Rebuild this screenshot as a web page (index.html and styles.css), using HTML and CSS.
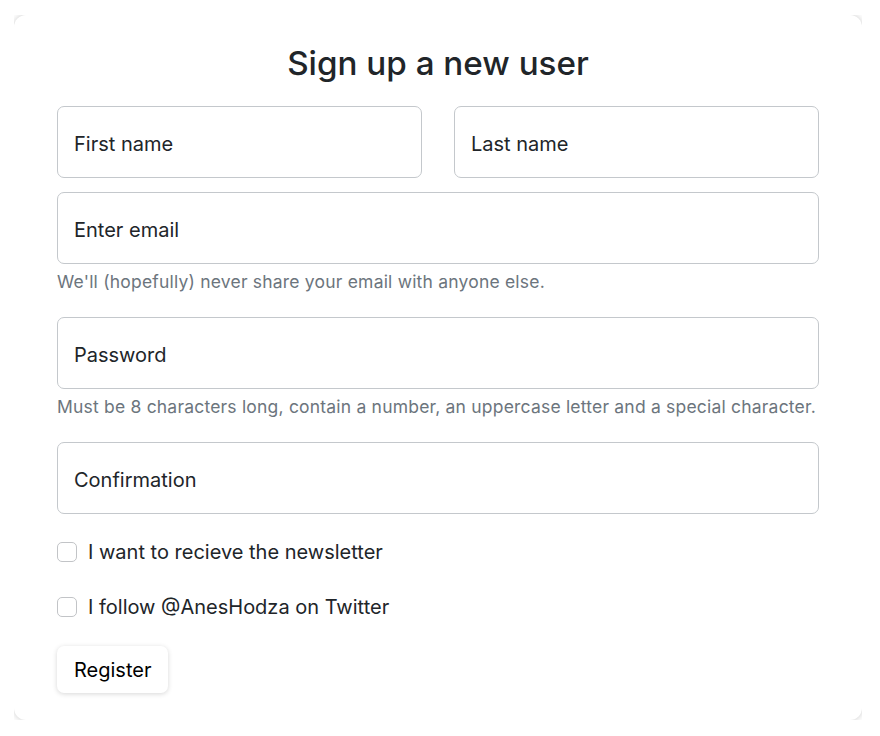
FILE: index.html
```html
<!DOCTYPE html>
<html lang="en">
<head>
    <meta charset="UTF-8">
    <meta name="viewport" content="width=device-width, initial-scale=1.0">
    <title>Sign up</title>
    <link rel="stylesheet" href="styles.css">
</head>
<body>

<div class="card">
    <h1 class="title">Sign up a new user</h1>

    <form class="signup-form">
        <div class="name-row">
            <input class="field" type="text" placeholder="First name">
            <input class="field" type="text" placeholder="Last name">
        </div>

        <div class="group">
            <input class="field" type="email" placeholder="Enter email">
            <div class="help">We'll (hopefully) never share your email with anyone else.</div>
        </div>

        <div class="group">
            <input class="field" type="password" placeholder="Password">
            <div class="help">Must be 8 characters long, contain a number, an uppercase letter and a special character.</div>
        </div>

        <input class="field" type="password" placeholder="Confirmation">

        <label class="check first-check">
            <input type="checkbox"> I want to recieve the newsletter
        </label>
        <label class="check">
            <input type="checkbox"> I follow @AnesHodza on Twitter
        </label>

        <button class="register" type="button">Register</button>
    </form>
</div>

</body>
</html>
```

FILE: styles.css
```css
body {
    margin: 15px 18px 16px 14px;
    font-family: Inter, "Liberation Sans", sans-serif;
    color: #212529;
    background: #ffffff;
}
.card {
    border-radius: 12px;
    box-shadow: 0 0 6px rgba(0, 0, 0, 0.22);
    padding: 26px 43px 26px 43px;
    min-height: 653px;
}
.title {
    margin: 0 0 20px 0;
    text-align: center;
    font-size: 33.2px;
    font-weight: 500;
    line-height: 45px;
}
.signup-form {
    display: flex;
    flex-direction: column;
}
.name-row {
    display: grid;
    grid-template-columns: 1fr 1fr;
    gap: 32px;
    margin-bottom: 14px;
}
.field {
    box-sizing: border-box;
    width: 100%;
    height: 72px;
    padding: 4px 16px 0 16px;
    border: 1px solid #c4c8cc;
    border-radius: 7px;
    font-family: inherit;
    font-size: 20px;
    color: #212529;
    background: #ffffff;
}
.field::placeholder {
    color: #212529;
    opacity: 1;
}
.group {
    margin-bottom: 22px;
}
.help {
    margin-top: 5px;
    font-size: 17.5px;
    letter-spacing: 0.2px;
    line-height: 26px;
    white-space: nowrap;
    color: #6c757d;
}
.check {
    display: flex;
    align-items: center;
    gap: 11px;
    height: 30px;
    font-size: 20px;
    margin-bottom: 25px;
}
.first-check {
    margin-top: 23px;
}
.check input {
    appearance: none;
    margin: 0;
    width: 20px;
    height: 20px;
    border: 1px solid #c2c4c7;
    border-radius: 5px;
    background: #ffffff;
}
.register {
    align-self: flex-start;
    margin-top: -1px;
    height: 47px;
    padding: 0 17px;
    border: none;
    border-radius: 7px;
    background: #ffffff;
    box-shadow: 0 1px 5px rgba(0, 0, 0, 0.16);
    font-family: inherit;
    font-size: 20px;
    color: #000000;
}
```
